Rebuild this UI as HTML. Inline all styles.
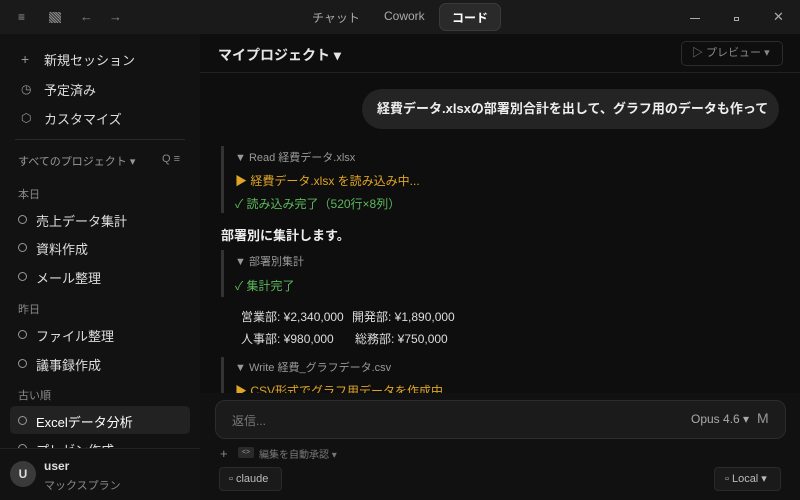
<!DOCTYPE html>
<html><head><meta charset="utf-8"><style>
*{margin:0;padding:0;box-sizing:border-box}
body{width:800px;height:500px;overflow:hidden;background:#0e0e0e;font-family:"Liberation Sans","Noto Sans CJK JP",sans-serif;color:#ddd;position:relative}
.a{position:absolute;white-space:nowrap}
#tb{left:0;top:0;width:800px;height:34px;background:#1a1a1a}
#sb{left:0;top:34px;width:200px;height:466px;background:#121212}
.si{font-size:13px;color:#ddd}
.ic{color:#999;font-size:12px}
.sec{font-size:11px;color:#888}
.ci{width:9px;height:9px;border:1.3px solid #999;border-radius:50%}
.y{color:#e0a526;font-size:12px}
.g{color:#5cb85c;font-size:12px}
.gr{color:#999;font-size:11px}
.bl{width:3px;background:#333;left:221px}
</style></head><body>
<div class="a" id="tb"></div>
<div class="a" style="left:18px;top:10px;color:#999;font-size:12px">≡</div>
<div class="a" style="left:49px;top:12px;width:12px;height:11px;background:repeating-linear-gradient(45deg,#888 0 1px,#333 1px 2px)"></div>
<div class="a" style="left:80px;top:9px;color:#888;font-size:13px">←</div>
<div class="a" style="left:109px;top:9px;color:#888;font-size:13px">→</div>
<div class="a" style="left:312px;top:9px;color:#aaa;font-size:12px">チャット</div>
<div class="a" style="left:384px;top:9px;color:#aaa;font-size:12px">Cowork</div>
<div class="a" style="left:439px;top:3px;width:62px;height:28px;background:#2a2a2a;border:1px solid #3a3a3a;border-radius:7px"></div>
<div class="a" style="left:452px;top:9px;color:#fff;font-size:12px;font-weight:bold">コード</div>
<div class="a" style="left:690px;top:18px;width:10px;height:1px;background:#aaa"></div>
<div class="a" style="left:734px;top:17px;width:5px;height:4px;border:1px solid #aaa"></div>
<div class="a" style="left:773px;top:9px;color:#aaa;font-size:13px">✕</div>

<div class="a" id="sb"></div>
<div class="a ic" style="left:21px;top:51px;font-size:14px">+</div>
<div class="a si" style="left:44px;top:50px">新規セッション</div>
<div class="a ic" style="left:21px;top:82px">◷</div>
<div class="a si" style="left:44px;top:80px">予定済み</div>
<div class="a ic" style="left:21px;top:111px">⬡</div>
<div class="a si" style="left:44px;top:109px">カスタマイズ</div>
<div class="a" style="left:15px;top:139px;width:170px;height:1px;background:#2a2a2a"></div>
<div class="a" style="left:18px;top:153px;font-size:11px;color:#999">すべてのプロジェクト ▾</div>
<div class="a" style="left:162px;top:153px;font-size:11px;color:#888">Q ≡</div>
<div class="a sec" style="left:18px;top:186px">本日</div>
<div class="a ci" style="left:18px;top:215px"></div><div class="a si" style="left:36px;top:211px">売上データ集計</div>
<div class="a ci" style="left:18px;top:243px"></div><div class="a si" style="left:36px;top:239px">資料作成</div>
<div class="a ci" style="left:18px;top:272px"></div><div class="a si" style="left:36px;top:268px">メール整理</div>
<div class="a sec" style="left:18px;top:301px">昨日</div>
<div class="a ci" style="left:18px;top:330px"></div><div class="a si" style="left:36px;top:326px">ファイル整理</div>
<div class="a ci" style="left:18px;top:359px"></div><div class="a si" style="left:36px;top:355px">議事録作成</div>
<div class="a sec" style="left:18px;top:387px">古い順</div>
<div class="a" style="left:10px;top:406px;width:180px;height:28px;background:#222;border-radius:5px"></div>
<div class="a ci" style="left:18px;top:416px"></div><div class="a si" style="left:36px;top:412px;color:#fff">Excelデータ分析</div>
<div class="a ci" style="left:18px;top:444px"></div><div class="a si" style="left:36px;top:440px">プレゼン作成</div>
<div class="a" style="left:0;top:448px;width:200px;height:52px;background:#121212;border-top:1px solid #222"></div>
<div class="a" style="left:10px;top:461px;width:26px;height:26px;border-radius:50%;background:#3a3a3a;color:#ddd;font-size:12px;text-align:center;line-height:26px;font-weight:bold">U</div>
<div class="a" style="left:44px;top:459px;font-size:12px;color:#ddd;font-weight:bold">user</div>
<div class="a" style="left:44px;top:477px;font-size:11px;color:#888">マックスプラン</div>

<div class="a" style="left:200px;top:72px;width:600px;height:1px;background:#222"></div>
<div class="a" style="left:218px;top:45px;font-size:14px;font-weight:bold;color:#e6e6e6">マイプロジェクト ▾</div>
<div class="a" style="left:681px;top:41px;width:102px;height:25px;border:1px solid #2c2c2c;border-radius:5px;color:#888;font-size:11px;line-height:23px;padding-left:10px">▷ プレビュー ▾</div>

<div class="a" style="left:362px;top:89px;width:417px;height:40px;background:#242424;border-radius:20px;font-size:13px;font-weight:bold;color:#eee;line-height:40px;padding-left:15px">経費データ.xlsxの部署別合計を出して、グラフ用のデータも作って</div>

<div class="a bl" style="top:146px;height:67px"></div>
<div class="a gr" style="left:235px;top:149px">▼ Read 経費データ.xlsx</div>
<div class="a y" style="left:235px;top:172px">▶ 経費データ.xlsx を読み込み中...</div>
<div class="a g" style="left:235px;top:195px">✓ 読み込み完了（520行×8列）</div>
<div class="a" style="left:221px;top:225px;font-size:13px;font-weight:bold;color:#eee">部署別に集計します。</div>
<div class="a bl" style="top:250px;height:47px"></div>
<div class="a gr" style="left:235px;top:253px">▼ 部署別集計</div>
<div class="a g" style="left:235px;top:277px">✓ 集計完了</div>
<div class="a" style="left:241px;top:308px;font-size:12px;color:#ddd">営業部: ¥2,340,000</div>
<div class="a" style="left:352px;top:308px;font-size:12px;color:#ddd">開発部: ¥1,890,000</div>
<div class="a" style="left:241px;top:330px;font-size:12px;color:#ddd">人事部: ¥980,000</div>
<div class="a" style="left:355px;top:330px;font-size:12px;color:#ddd">総務部: ¥750,000</div>
<div class="a bl" style="top:357px;height:40px"></div>
<div class="a gr" style="left:235px;top:359px">▼ Write 経費_グラフデータ.csv</div>
<div class="a y" style="left:235px;top:382px">▶ CSV形式でグラフ用データを作成中</div>

<div class="a" style="left:200px;top:393px;width:600px;height:107px;background:#111"></div>
<div class="a" style="left:215px;top:400px;width:571px;height:39px;background:#1b1b1b;border:1px solid #2c2c2c;border-radius:10px"></div>
<div class="a" style="left:232px;top:412px;font-size:12px;color:#777">返信...</div>
<div class="a" style="left:691px;top:412px;font-size:12px;color:#aaa">Opus 4.6 ▾</div>
<div class="a" style="left:757px;top:410px;font-size:14px;color:#999">M</div>
<div class="a" style="left:220px;top:446px;font-size:13px;color:#888">+</div>
<div class="a" style="left:238px;top:447px;width:16px;height:11px;background:#2a2a2a;border-radius:2px;color:#999;font-size:7px;text-align:center;line-height:11px">&lt;&gt;</div>
<div class="a" style="left:259px;top:446px;font-size:10px;color:#777">編集を自動承認 ▾</div>
<div class="a" style="left:219px;top:467px;width:63px;height:24px;background:#1a1a1a;border:1px solid #2a2a2a;border-radius:4px;color:#bbb;font-size:11px;line-height:22px;padding-left:9px">▫ claude</div>
<div class="a" style="left:714px;top:467px;width:67px;height:24px;background:#1a1a1a;border:1px solid #2a2a2a;border-radius:4px;color:#bbb;font-size:11px;line-height:22px;padding-left:10px">▫ Local ▾</div>
</body></html>
